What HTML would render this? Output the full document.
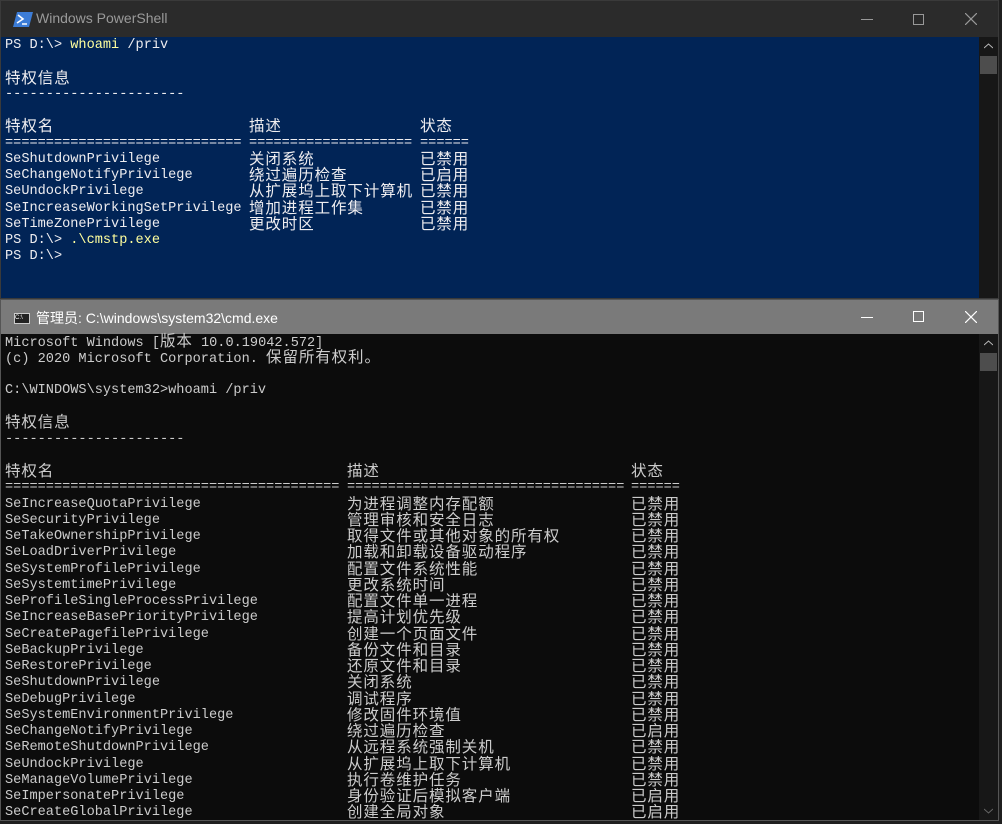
<!DOCTYPE html>
<html><head><meta charset="utf-8"><style>
*{margin:0;padding:0;box-sizing:border-box}
html,body{width:1002px;height:824px;overflow:hidden}
body{background:#1f1f1f;position:relative;font-family:"Liberation Mono","Noto Sans CJK SC",monospace}
.win{position:absolute;left:0;width:999px;overflow:hidden}
.tb{position:absolute;left:0;right:0;top:0;font-family:"Liberation Sans","Noto Sans CJK SC",sans-serif;font-size:14px}
.col{position:absolute;font-size:13.6px}
.col>div{height:16.25px;line-height:16px;white-space:pre;overflow:visible}
.cj{font-size:15.5px;letter-spacing:0.9px;line-height:16px}
.sb{position:absolute;right:0;width:19px}
</style></head><body>

<!-- PowerShell -->
<div class="win" style="top:0;height:299px;background:#012456;border:1px solid #3a3a3a">
 <div class="tb" style="height:36px;background:#2b2b2b;color:#9a9a9a">
  <svg style="position:absolute;left:12px;top:11px" width="20" height="15"><polygon points="4,0 20,0 16,15 0,15" fill="#3c7cd6"/><path d="M5,3 L10,7 L4,11" stroke="#fff" stroke-width="1.6" fill="none"/><path d="M9,12 H14" stroke="#fff" stroke-width="1.5"/></svg>
  <span style="position:absolute;left:35px;top:9px">Windows PowerShell</span>
  <div style="position:absolute;left:860px;top:18px;width:12px;height:1px;background:#999"></div>
  <div style="position:absolute;left:912px;top:13px;width:11px;height:11px;border:1px solid #999"></div>
  <svg style="position:absolute;left:964px;top:12px" width="12" height="12"><path d="M0,0L12,12M12,0L0,12" stroke="#999" stroke-width="1.2"/></svg>
 </div>
 <div class="sb" style="top:36px;bottom:0;background:#171717"><div style="position:absolute;top:19px;left:1px;width:17px;height:18px;background:#4d4d4d"></div><svg style="position:absolute;top:6px;left:5px" width="9" height="6"><path d="M0,5L4.5,1L9,5" stroke="#bbb" fill="none"/></svg></div>
 <div class="col" style="left:4px;top:37px;color:#eeedf0"><div>PS D:\&gt; <span style="color:#ffff9e">whoami</span> /priv</div><div></div><div><span class="cj">特权信息</span></div><div>----------------------</div><div></div><div><span class="cj">特权名</span></div><div>=============================</div><div>SeShutdownPrivilege</div><div>SeChangeNotifyPrivilege</div><div>SeUndockPrivilege</div><div>SeIncreaseWorkingSetPrivilege</div><div>SeTimeZonePrivilege</div><div>PS D:\&gt; <span style="color:#ffff9e">.\cmstp.exe</span></div><div>PS D:\&gt;</div></div>
 <div class="col" style="left:248px;top:118.25px;color:#eeedf0"><div><span class="cj">描述</span></div><div>====================</div><div><span class="cj">关闭系统</span></div><div><span class="cj">绕过遍历检查</span></div><div><span class="cj">从扩展坞上取下计算机</span></div><div><span class="cj">增加进程工作集</span></div><div><span class="cj">更改时区</span></div></div>
 <div class="col" style="left:419px;top:118.25px;color:#eeedf0"><div><span class="cj">状态</span></div><div>======</div><div><span class="cj">已禁用</span></div><div><span class="cj">已启用</span></div><div><span class="cj">已禁用</span></div><div><span class="cj">已禁用</span></div><div><span class="cj">已禁用</span></div></div>
</div>

<!-- CMD -->
<div class="win" style="top:299px;height:522px;background:#0c0c0c;border:1px solid #555">
 <div class="tb" style="height:34px;background:#7a7a7a;color:#fff">
  <div style="position:absolute;left:13px;top:13px;width:16px;height:11px;background:#222;border:1px solid #ccc;font-size:6px;color:#fff;line-height:9px">C:\</div>
  <span style="position:absolute;left:35px;top:8px">管理员: C:\windows\system32\cmd.exe</span>
  <div style="position:absolute;left:860px;top:17px;width:12px;height:1px;background:#fff"></div>
  <div style="position:absolute;left:912px;top:11px;width:11px;height:11px;border:1px solid #fff"></div>
  <svg style="position:absolute;left:964px;top:11px" width="12" height="12"><path d="M0,0L12,12M12,0L0,12" stroke="#fff" stroke-width="1.2"/></svg>
 </div>
 <div class="sb" style="top:34px;bottom:0;background:#171717"><div style="position:absolute;top:19px;left:1px;width:17px;height:18px;background:#4d4d4d"></div><svg style="position:absolute;top:6px;left:5px" width="9" height="6"><path d="M0,5L4.5,1L9,5" stroke="#bbb" fill="none"/></svg><svg style="position:absolute;bottom:6px;left:5px" width="9" height="6"><path d="M0,1L4.5,5L9,1" stroke="#666" fill="none"/></svg></div>
 <div class="col" style="left:4px;top:34px;color:#cccccc"><div>Microsoft Windows [<span class="cj">版本</span> 10.0.19042.572]</div><div>(c) 2020 Microsoft Corporation. <span class="cj">保留所有权利。</span></div><div></div><div>C:\WINDOWS\system32&gt;whoami /priv</div><div></div><div><span class="cj">特权信息</span></div><div>----------------------</div><div></div><div><span class="cj">特权名</span></div><div>=========================================</div><div>SeIncreaseQuotaPrivilege</div><div>SeSecurityPrivilege</div><div>SeTakeOwnershipPrivilege</div><div>SeLoadDriverPrivilege</div><div>SeSystemProfilePrivilege</div><div>SeSystemtimePrivilege</div><div>SeProfileSingleProcessPrivilege</div><div>SeIncreaseBasePriorityPrivilege</div><div>SeCreatePagefilePrivilege</div><div>SeBackupPrivilege</div><div>SeRestorePrivilege</div><div>SeShutdownPrivilege</div><div>SeDebugPrivilege</div><div>SeSystemEnvironmentPrivilege</div><div>SeChangeNotifyPrivilege</div><div>SeRemoteShutdownPrivilege</div><div>SeUndockPrivilege</div><div>SeManageVolumePrivilege</div><div>SeImpersonatePrivilege</div><div>SeCreateGlobalPrivilege</div></div>
 <div class="col" style="left:346px;top:164px;color:#cccccc"><div><span class="cj">描述</span></div><div>==================================</div><div><span class="cj">为进程调整内存配额</span></div><div><span class="cj">管理审核和安全日志</span></div><div><span class="cj">取得文件或其他对象的所有权</span></div><div><span class="cj">加载和卸载设备驱动程序</span></div><div><span class="cj">配置文件系统性能</span></div><div><span class="cj">更改系统时间</span></div><div><span class="cj">配置文件单一进程</span></div><div><span class="cj">提高计划优先级</span></div><div><span class="cj">创建一个页面文件</span></div><div><span class="cj">备份文件和目录</span></div><div><span class="cj">还原文件和目录</span></div><div><span class="cj">关闭系统</span></div><div><span class="cj">调试程序</span></div><div><span class="cj">修改固件环境值</span></div><div><span class="cj">绕过遍历检查</span></div><div><span class="cj">从远程系统强制关机</span></div><div><span class="cj">从扩展坞上取下计算机</span></div><div><span class="cj">执行卷维护任务</span></div><div><span class="cj">身份验证后模拟客户端</span></div><div><span class="cj">创建全局对象</span></div></div>
 <div class="col" style="left:630px;top:164px;color:#cccccc"><div><span class="cj">状态</span></div><div>======</div><div><span class="cj">已禁用</span></div><div><span class="cj">已禁用</span></div><div><span class="cj">已禁用</span></div><div><span class="cj">已禁用</span></div><div><span class="cj">已禁用</span></div><div><span class="cj">已禁用</span></div><div><span class="cj">已禁用</span></div><div><span class="cj">已禁用</span></div><div><span class="cj">已禁用</span></div><div><span class="cj">已禁用</span></div><div><span class="cj">已禁用</span></div><div><span class="cj">已禁用</span></div><div><span class="cj">已禁用</span></div><div><span class="cj">已禁用</span></div><div><span class="cj">已启用</span></div><div><span class="cj">已禁用</span></div><div><span class="cj">已禁用</span></div><div><span class="cj">已禁用</span></div><div><span class="cj">已启用</span></div><div><span class="cj">已启用</span></div></div>
</div>
</body></html>
